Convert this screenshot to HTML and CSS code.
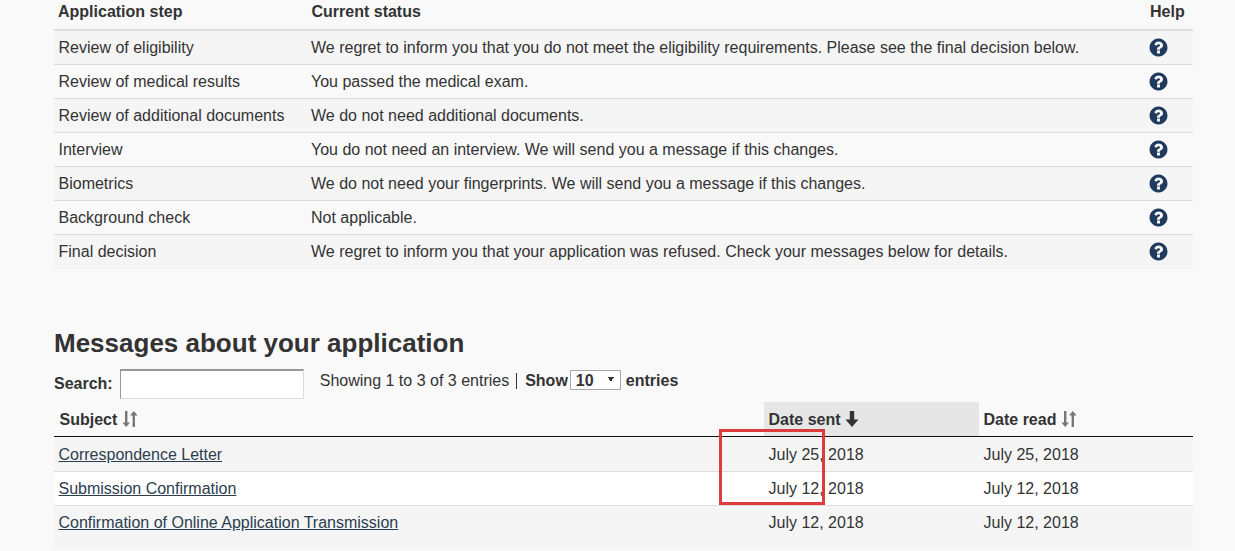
FILE: index.html
```html
<!DOCTYPE html>
<html lang="en">
<head>
    <meta charset="UTF-8">
    <meta name="viewport" content="width=device-width, initial-scale=1.0">
    <title>Application status</title>
    <link rel="stylesheet" href="styles.css">
</head>
<body>
    <svg class="icon-defs" aria-hidden="true">
        <symbol id="help" viewBox="0 0 1792 1792">
            <path d="M1024 1376v-192q0-14-9-23t-23-9h-192q-14 0-23 9t-9 23v192q0 14 9 23t23 9h192q14 0 23-9t9-23zm256-672q0-88-55.5-163t-138.5-116-170-41q-243 0-371 213-15 24 8 42l132 100q7 6 19 6 16 0 25-12 53-68 86-92 34-24 86-24 48 0 85.5 26t37.5 59q0 38-20 61t-68 45q-63 28-115.5 86.5t-52.5 125.5v36q0 14 9 23t23 9h192q14 0 23-9t9-23q0-19 21.5-49.5t54.5-49.5q32-18 49-28.5t46-35 44.5-48 28-60.5 12.5-81zm384 192q0 209-103 385.5t-279.5 279.5-385.5 103-385.5-103-279.5-279.5-103-385.5 103-385.5 279.5-279.5 385.5-103 385.5 103 279.5 279.5 103 385.5z"/>
        </symbol>
        <symbol id="sort" viewBox="0 0 16 16">
            <path d="M3 0h2.4v11.5H8L4.2 16 .4 11.5H3zM10.6 16V4.500H8L11.800 0l3.800 4.500H13V16z"/>
        </symbol>
        <symbol id="sort-down" viewBox="0 0 14 16">
            <path d="M4.800 0h4.400v8.500H13.500L7 16 .5 8.500h4.300z"/>
        </symbol>
    </svg>

    <div class="page">
        <table class="status-table">
            <colgroup>
                <col class="col-step"><col class="col-status"><col class="col-help">
            </colgroup>
            <thead>
                <tr><th>Application step</th><th>Current status</th><th>Help</th></tr>
            </thead>
            <tbody>
                <tr>
                    <td>Review of eligibility</td>
                    <td>We regret to inform you that you do not meet the eligibility requirements. Please see the final decision below.</td>
                    <td><svg class="help-icon"><use href="#help"/></svg></td>
                </tr>
                <tr>
                    <td>Review of medical results</td>
                    <td>You passed the medical exam.</td>
                    <td><svg class="help-icon"><use href="#help"/></svg></td>
                </tr>
                <tr>
                    <td>Review of additional documents</td>
                    <td>We do not need additional documents.</td>
                    <td><svg class="help-icon"><use href="#help"/></svg></td>
                </tr>
                <tr>
                    <td>Interview</td>
                    <td>You do not need an interview. We will send you a message if this changes.</td>
                    <td><svg class="help-icon"><use href="#help"/></svg></td>
                </tr>
                <tr>
                    <td>Biometrics</td>
                    <td>We do not need your fingerprints. We will send you a message if this changes.</td>
                    <td><svg class="help-icon"><use href="#help"/></svg></td>
                </tr>
                <tr>
                    <td>Background check</td>
                    <td>Not applicable.</td>
                    <td><svg class="help-icon"><use href="#help"/></svg></td>
                </tr>
                <tr>
                    <td>Final decision</td>
                    <td>We regret to inform you that your application was refused. Check your messages below for details.</td>
                    <td><svg class="help-icon"><use href="#help"/></svg></td>
                </tr>
            </tbody>
        </table>

        <h2 class="section-title">Messages about your application</h2>

        <div class="table-controls">
            <label class="search-label" for="search">Search:</label>
            <input type="text" class="search-input" id="search">
            <div class="table-info">
                <span class="info-text">Showing 1 to 3 of 3 entries</span>
                <span class="info-sep"></span>
                <strong class="info-text show-label">Show</strong>
                <select class="entries-select"><option>10</option></select>
                <strong class="info-text">entries</strong>
            </div>
        </div>

        <table class="messages-table">
            <colgroup>
                <col class="col-subject"><col class="col-date"><col>
            </colgroup>
            <thead>
                <tr>
                    <th>Subject <svg class="sort-icon"><use href="#sort"/></svg></th>
                    <th class="sorted">Date sent <svg class="sort-icon sort-active"><use href="#sort-down"/></svg></th>
                    <th>Date read <svg class="sort-icon"><use href="#sort"/></svg></th>
                </tr>
            </thead>
            <tbody>
                <tr>
                    <td><a href="#">Correspondence Letter</a></td>
                    <td>July 25, 2018</td>
                    <td>July 25, 2018</td>
                </tr>
                <tr>
                    <td><a href="#">Submission Confirmation</a></td>
                    <td>July 12, 2018</td>
                    <td>July 12, 2018</td>
                </tr>
                <tr>
                    <td><a href="#">Confirmation of Online Application Transmission</a></td>
                    <td>July 12, 2018</td>
                    <td>July 12, 2018</td>
                </tr>
            </tbody>
        </table>
    </div>

    <div class="highlight-box"></div>
</body>
</html>
```

FILE: styles.css
```css
* {
    margin: 0;
    padding: 0;
    box-sizing: border-box;
}

html, body {
    height: 551px;
    overflow: hidden;
}

body {
    font-family: "Liberation Sans", Arial, sans-serif;
    font-size: 16px;
    color: #333;
    background: #f9f9f9;
    position: relative;
}

.icon-defs {
    display: none;
}

.page {
    padding: 1px 42px 0 54px;
}

table {
    width: 100%;
    border-collapse: collapse;
    table-layout: fixed;
}

th {
    text-align: left;
    font-weight: bold;
}

/* status table */
.col-step {
    width: 252px;
}

.col-status {
    width: 839px;
}

.status-table th {
    height: 29px;
    padding: 0 4px 6px;
    border-bottom: 2px solid #ddd;
}

.status-table th:nth-child(2) {
    padding-left: 5.5px;
}

.status-table th:nth-child(3) {
    padding-left: 5px;
}

.status-table td {
    height: 34px;
    padding: 2px 5px 0;
    border-bottom: 1px solid #ddd;
}

.status-table td:first-child {
    padding-left: 4.5px;
}

.status-table td:last-child {
    padding-top: 0;
}

.status-table tbody tr:nth-child(odd) {
    background: #f5f5f5;
}

.status-table tbody tr:last-child td {
    height: 35px;
    padding-bottom: 1px;
    border-bottom: none;
}

.help-icon {
    display: block;
    width: 21px;
    height: 21px;
    margin-left: -2px;
    fill: #1f3a5c;
}

/* messages */
.section-title {
    margin-top: 58px;
    font-size: 26px;
    line-height: 32px;
    color: #333;
}

.table-controls {
    display: flex;
    align-items: flex-start;
    margin-top: 10px;
    height: 33px;
}

.search-label {
    font-weight: bold;
    margin: 6px 7px 0 0;
}

.search-input {
    width: 184px;
    height: 30px;
    background: #fff;
    border: 1px solid #ddd;
    border-top: 2px solid #999;
    border-left: 1px solid #999;
}

.table-info {
    display: flex;
    align-items: flex-start;
    gap: 4px;
    height: 22px;
    margin-left: 16px;
}

.info-text {
    padding-top: 3px;
}

.info-sep {
    width: 1px;
    height: 16px;
    margin: 4px 0 0 3px;
    background: #333;
}

.show-label {
    margin: 0 -2px 0 4px;
}

.entries-select {
    width: 51px;
    height: 20px;
    margin: 1px 1px 0 0;
    padding-left: 5px;
    font-family: "Liberation Sans", Arial, sans-serif;
    font-size: 16px;
    font-weight: bold;
    color: #333;
    appearance: none;
    background-color: #fff;
    background-image: linear-gradient(to top right, transparent 50%, #333 50%), linear-gradient(to top left, transparent 50%, #333 50%);
    background-size: 3px 5px;
    background-position: 37px 6px, 40px 6px;
    background-repeat: no-repeat;
    border: 1px solid #aaa;
    border-radius: 0;
}

.col-subject {
    width: 710px;
}

.col-date {
    width: 215px;
}

.messages-table th {
    height: 34px;
    padding: 3px 5px 0 4.5px;
    border-bottom: 1px solid #111;
}

.messages-table th.sorted {
    background: #e6e6e6;
}

.messages-table th:first-child {
    padding-left: 5.5px;
}

.messages-table td {
    height: 34px;
    padding: 1px 5px 0 4.5px;
    border-bottom: 1px solid #ddd;
}

.messages-table tbody tr:first-child td {
    height: 35px;
    padding-top: 2px;
}

.messages-table tbody tr:nth-child(even) {
    background: #fff;
}

.messages-table tbody tr:nth-child(odd) {
    background: #f5f5f5;
}

.messages-table tbody tr:last-child td {
    height: 45px;
    padding-bottom: 11px;
    border-bottom: none;
}

.messages-table a {
    color: #2c3e50;
}

.sort-icon {
    width: 16px;
    height: 16px;
    vertical-align: -2px;
    fill: #777;
}

.sort-active {
    width: 14px;
    fill: #333;
}

/* red annotation drawn over the table */
.highlight-box {
    position: absolute;
    left: 719px;
    top: 429px;
    width: 106px;
    height: 76px;
    border: 3px solid #dc3c3c;
}
```
